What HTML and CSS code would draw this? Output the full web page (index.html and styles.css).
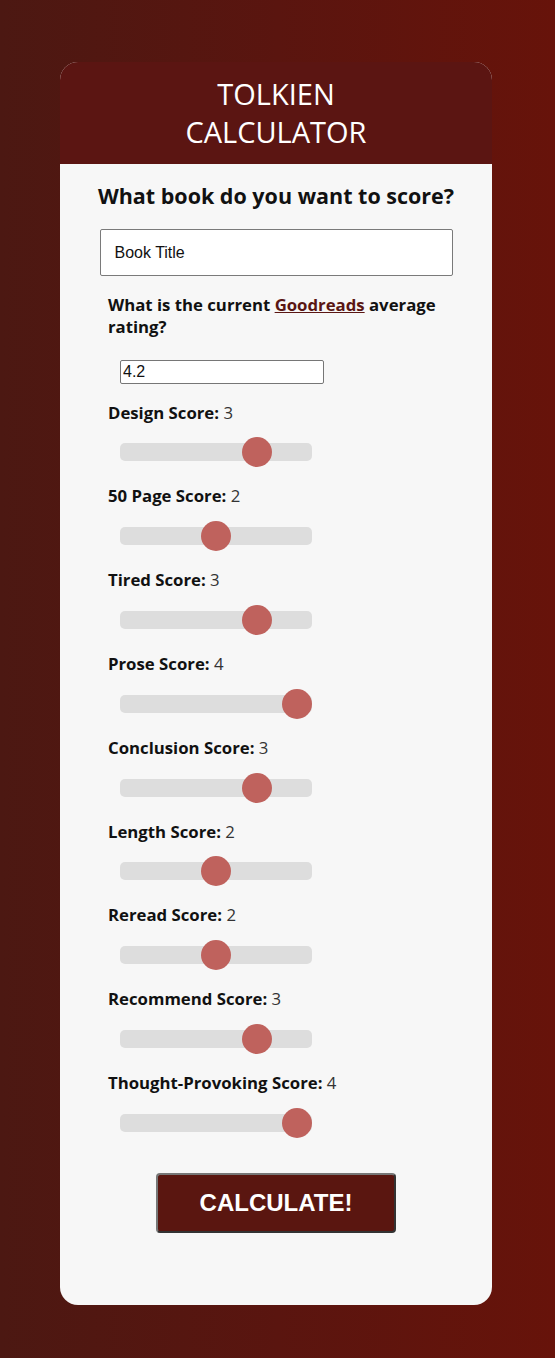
FILE: index.html
```html
<!DOCTYPE html>
<html>
<head>
<meta charset="utf-8">
<link rel="stylesheet" href="styles.css">
</head>
<body>
<div class="card">
  <header class="card-header">
    <h1 class="title">TOLKIEN<br>CALCULATOR</h1>
  </header>
  <main class="card-body">
    <h2 class="question">What book do you want to score?</h2>
    <input class="book-input" type="text" value="Book Title">
    <div class="fields">
      <p class="label rating-label">What is the current <a href="#" class="link">Goodreads</a> average rating?</p>
      <input class="rating-input" type="text" value="4.2">
      <div class="group">
        <p class="label">Design Score: <span class="val">3</span></p>
        <input class="slider" type="range" min="0" max="4" value="3">
      </div>
      <div class="group">
        <p class="label">50 Page Score: <span class="val">2</span></p>
        <input class="slider" type="range" min="0" max="4" value="2">
      </div>
      <div class="group">
        <p class="label">Tired Score: <span class="val">3</span></p>
        <input class="slider" type="range" min="0" max="4" value="3">
      </div>
      <div class="group">
        <p class="label">Prose Score: <span class="val">4</span></p>
        <input class="slider" type="range" min="0" max="4" value="4">
      </div>
      <div class="group">
        <p class="label">Conclusion Score: <span class="val">3</span></p>
        <input class="slider" type="range" min="0" max="4" value="3">
      </div>
      <div class="group">
        <p class="label">Length Score: <span class="val">2</span></p>
        <input class="slider" type="range" min="0" max="4" value="2">
      </div>
      <div class="group">
        <p class="label">Reread Score: <span class="val">2</span></p>
        <input class="slider" type="range" min="0" max="4" value="2">
      </div>
      <div class="group">
        <p class="label">Recommend Score: <span class="val">3</span></p>
        <input class="slider" type="range" min="0" max="4" value="3">
      </div>
      <div class="group">
        <p class="label">Thought-Provoking Score: <span class="val">4</span></p>
        <input class="slider" type="range" min="0" max="4" value="4">
      </div>
    </div>
    <button class="calc-btn" type="button">CALCULATE!</button>
  </main>
</div>
</body>
</html>
```
FILE: styles.css
```css
html, body {
  margin: 0;
  padding: 0;
}
body {
  min-height: 1358px;
  background: linear-gradient(to right, #4c1812, #5a150f 50%, #67130a);
  font-family: "Open Sans", "Liberation Sans", sans-serif;
  padding-top: 62px;
  box-sizing: border-box;
}
.card {
  width: 432px;
  margin-left: 60px;
  border-radius: 18px;
  overflow: hidden;
  background: #f7f7f7;
}
.card-header {
  background: #5b1512;
  padding: 13px 0;
  height: 102px;
  box-sizing: border-box;
}
.title {
  margin: 0;
  color: #ffffff;
  font-weight: 400;
  font-size: 29px;
  line-height: 38px;
  text-align: center;
}
.card-body {
  padding: 18px 0 72px;
  display: flex;
  flex-direction: column;
  align-items: center;
}
.question {
  margin: 0 0 19px;
  font-size: 21.5px;
  font-weight: 700;
  color: #111;
  line-height: 28px;
}
.book-input {
  width: 353px;
  height: 47px;
  box-sizing: border-box;
  border: 1px solid #7a7a7a;
  border-radius: 2px;
  padding: 0 14px;
  font-family: "Liberation Sans", Arial, sans-serif;
  font-size: 16px;
  color: #111;
  background: #fff;
  margin: 0 0 18px;
}
.fields {
  align-self: stretch;
  padding: 0 44px 0 48px;
  display: flex;
  flex-direction: column;
}
.label {
  margin: 0;
  font-size: 16.75px;
  font-weight: 700;
  color: #111;
  line-height: 21.8px;
}
.rating-label {
  margin-bottom: 22px;
}
.link {
  color: #5a1613;
  text-decoration: underline;
}
.val {
  font-weight: 400;
  color: #333;
}
.rating-input {
  width: 204px;
  height: 24px;
  box-sizing: border-box;
  margin: 0 0 18px 12px;
  padding: 1px 2px;
  border: 1px solid #767676;
  border-radius: 2px;
  font-family: "Liberation Sans", Arial, sans-serif;
  font-size: 16px;
  color: #111;
  background: #fff;
}
.group {
  display: flex;
  flex-direction: column;
  padding-bottom: 24px;
}
.slider {
  -webkit-appearance: none;
  appearance: none;
  width: 192px;
  height: 18px;
  margin: 20px 0 0 12px;
  padding: 0;
  border-radius: 5px;
  background: #dddddd;
  outline: none;
}
.slider::-webkit-slider-thumb {
  -webkit-appearance: none;
  appearance: none;
  width: 30px;
  height: 30px;
  border-radius: 50%;
  background: #bf625d;
  border: none;
}
.calc-btn {
  margin-top: 17px;
  width: 240px;
  height: 60px;
  background: #5a1610;
  color: #fff;
  font-family: "Liberation Sans", Arial, sans-serif;
  font-weight: 700;
  font-size: 24px;
  border: 2px solid #333333;
  border-top-color: #777777;
  border-left-color: #777777;
  border-radius: 4px;
  cursor: pointer;
}
```
